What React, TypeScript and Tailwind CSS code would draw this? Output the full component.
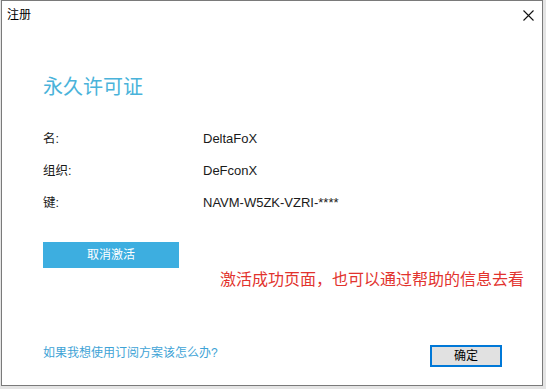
const FONT = "font-['Liberation_Sans','Noto_Sans_CJK_SC',sans-serif]"

const ROWS = [
  { label: '名:', value: 'DeltaFoX' },
  { label: '组织:', value: 'DeFconX' },
  { label: '键:', value: 'NAVM-W5ZK-VZRI-****' },
]

export default function App() {
  return (
    <div className={`w-[546px] h-[389px] bg-[#e4e4e4] ${FONT}`}>
      <div className="ml-[1px] w-[542px] h-[386px] border border-[#7a7a7a] bg-white flex flex-col">
        {/* title bar */}
        <div className="h-[28px] flex items-center justify-between pl-[5px] pr-[8px]">
          <span className="text-[12px] text-black">注册</span>
          <svg width="11" height="11" viewBox="0 0 11 11">
            <path d="M0.5 0.5 L10.5 10.5 M10.5 0.5 L0.5 10.5" stroke="#111" strokeWidth="1.1" />
          </svg>
        </div>

        <div className="pl-[41px]">
          <h1 className="mt-[44px] text-[20px] leading-[28px] text-[#4ab3da]">永久许可证</h1>

          <div className="mt-[22px]">
            {ROWS.map(r => (
              <div key={r.label} className="h-[32px] flex items-center text-[12.5px] text-[#1a1a1a]">
                <span className="w-[160px]">{r.label}</span>
                <span className="text-[13px]">{r.value}</span>
              </div>
            ))}
          </div>

          <button className="mt-[23px] w-[136px] h-[26px] bg-[#3daee0] text-white text-[12px]">
            取消激活
          </button>
        </div>

        <div className="mt-[2px] pr-[18px] text-right text-[16px] leading-[20px] text-[#e2332e]">
          激活成功页面，也可以通过帮助的信息去看
        </div>

        <div className="mt-[55px] pl-[41px] pr-[40px] flex items-start justify-between">
          <span className="text-[12px] leading-[16px] text-[#3ea3d6]">如果我想使用订阅方案该怎么办?</span>
          <button className="w-[72px] h-[22px] border-2 border-[#0078d7] bg-[#e1e1e1] text-[12px] text-black flex items-center justify-center">
            确定
          </button>
        </div>
      </div>
    </div>
  )
}
